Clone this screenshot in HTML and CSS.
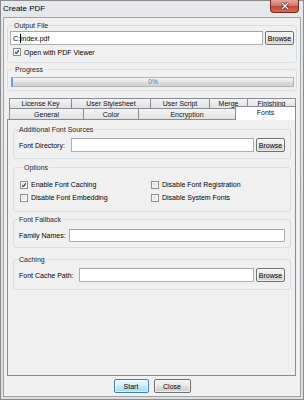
FILE: index.html
```html
<!DOCTYPE html>
<html>
<head>
<meta charset="utf-8">
<link rel="stylesheet" href="styles.css">
</head>
<body>
<div class="window">
  <div class="titlebar">
    <span class="title">Create PDF</span>
    <div class="close">
      <svg width="12" height="8" viewBox="0 0 12 8"><path d="M3 1 L9 7 M9 1 L3 7" stroke="#5a1a14" stroke-width="2.6"/><path d="M3 1 L9 7 M9 1 L3 7" stroke="#ffffff" stroke-width="1.4"/></svg>
    </div>
  </div>
  <div class="client">
    <div class="group g-output">
      <span class="gt">Output File</span>
      <div class="row out-row">
        <div class="field grow"><span class="val">C:<span class="caret"></span>index.pdf</span></div>
        <button class="btn">Browse</button>
      </div>
      <label class="check out-check"><span class="box checked"></span>Open with PDF Viewer</label>
    </div>
    <div class="group g-progress">
      <span class="gt">Progress</span>
      <div class="progress"><span>0%</span></div>
    </div>

    <div class="tabs">
      <div class="tabrow r1">
        <div class="tab t-lic">License Key</div>
        <div class="tab t-uss">User Stylesheet</div>
        <div class="tab t-usc">User Script</div>
        <div class="tab t-mrg">Merge</div>
        <div class="tab t-fin last">Finishing</div>
      </div>
      <div class="tabrow r2">
        <div class="tab t-gen">General</div>
        <div class="tab t-col">Color</div>
        <div class="tab t-enc">Encryption</div>
        <div class="tab t-fnt sel last">Fonts</div>
      </div>
    </div>
    <div class="panel">
      <div class="group p1">
        <span class="gt">Additional Font Sources</span>
        <div class="row r-p1">
          <span class="lbl l-dir">Font Directory:</span>
          <div class="field grow"></div>
          <button class="btn">Browse</button>
        </div>
      </div>
      <div class="group p2">
        <span class="gt">Options</span>
        <div class="grid">
          <label class="check"><span class="box checked"></span>Enable Font Caching</label>
          <label class="check"><span class="box"></span>Disable Font Registration</label>
          <label class="check"><span class="box"></span>Disable Font Embedding</label>
          <label class="check"><span class="box"></span>Disable System Fonts</label>
        </div>
      </div>
      <div class="group p3">
        <span class="gt">Font Fallback</span>
        <div class="row r-p3">
          <span class="lbl l-fam">Family Names:</span>
          <div class="field grow f13"></div>
        </div>
      </div>
      <div class="group p4">
        <span class="gt">Caching</span>
        <div class="row r-p4">
          <span class="lbl l-cache">Font Cache Path:</span>
          <div class="field grow"></div>
          <button class="btn">Browse</button>
        </div>
      </div>
    </div>
    <div class="buttons">
      <button class="btn b-start default">Start</button>
      <button class="btn b-close">Close</button>
    </div>
  </div>
</div>
</body>
</html>
```
FILE: styles.css
```css
* { box-sizing: border-box; }
html, body { margin: 0; padding: 0; }
body {
  width: 304px; height: 400px; overflow: hidden;
  background: #ffffff;
  font-family: "Liberation Sans", Arial, sans-serif;
  font-size: 7px;
  color: #000;
}
.window {
  width: 304px; height: 400px;
  border: 1px solid #8c8c8c;
  background: linear-gradient(#e6e8eb, #dadde1);
  padding: 0 2px 2px 2px;
  display: flex; flex-direction: column;
}
.titlebar {
  height: 16px;
  flex: none;
  display: flex; align-items: flex-start;
}
.title {
  font-size: 8px;
  line-height: 15px;
  color: #000;
}
.close {
  margin-left: auto;
  margin-right: 2px;
  width: 29px; height: 13px;
  margin-top: -1px;
  border: 1px solid #6e2a22;
  border-top: none;
  border-radius: 0 0 4px 4px;
  background: linear-gradient(#e6a79d 0%, #d47868 45%, #c24a36 55%, #d66a55 100%);
  display: flex; align-items: center; justify-content: center;
}
.client {
  flex: 1;
  border: 1px solid #a3a3a3;
  background: #f0f0f0;
  padding: 0 3px;
  display: flex; flex-direction: column;
}

/* group boxes: title sits on the top border line */
.group {
  flex: none;
  display: flex; flex-direction: column;
  border: 1px solid #d5dfe5;
  border-radius: 3px;
}
.gt {
  align-self: flex-start;
  margin: -5px 0 0 3px;
  padding: 0 1px;
  height: 9px;
  line-height: 9px;
  background: #f0f0f0;
  color: #1e1e1e;
  white-space: nowrap;
}
.row { display: flex; align-items: center; }
.grow { flex: 1; }
.field {
  height: 14px;
  background: #fff;
  border: 1px solid #abadb3;
  border-top-color: #a3a6ad;
  display: flex; align-items: center;
  padding-left: 2px;
}
.field.f13 { height: 13px; }
.val { line-height: 9px; display: flex; align-items: center; }
.caret { display: inline-block; width: 1px; height: 9px; background: #000; }
.btn {
  font-family: inherit;
  font-size: 7px;
  height: 14px;
  width: 29px;
  padding: 0;
  margin: 0;
  color: #000;
  border: 1px solid #707070;
  border-radius: 2px;
  background: linear-gradient(#f2f2f2 0%, #ebebeb 45%, #dddddd 55%, #cfcfcf 100%);
  box-shadow: inset 0 0 0 1px rgba(255,255,255,0.6);
  flex: none;
}
.row .btn { margin-left: 2px; }
.check { display: flex; align-items: center; height: 13px; white-space: nowrap; }
.box {
  width: 8px; height: 8px;
  border: 1px solid #8e8f8f;
  background: linear-gradient(135deg, #dcdcdc, #f8f8f8);
  box-shadow: inset 0 0 0 1px #f4f4f4;
  margin-right: 3px;
  flex: none;
}
.box.checked {
  background: url("data:image/svg+xml,%3Csvg xmlns='http://www.w3.org/2000/svg' width='6' height='6' viewBox='0 0 6 6'%3E%3Cpath d='M0.8 3.2 L2.3 4.9 L5.3 0.6' fill='none' stroke='%23344a7a' stroke-width='1.2'/%3E%3C/svg%3E") center/6px 6px no-repeat, linear-gradient(135deg, #dcdcdc, #f8f8f8);
}

/* top groups */
.g-output { margin-top: 7px; height: 38px; padding: 0 2px; }
.out-row { margin-top: 1px; }
.out-check { margin: 1px 0 0 3px; height: 12px; }
.g-progress { margin-top: 6px; height: 22px; padding: 0 2px 0 3px; }
.progress {
  margin-top: 3px;
  height: 10px;
  border: 1px solid #b2b2b2;
  border-radius: 1px;
  background: linear-gradient(#f3f3f3 0%, #e8e8e8 45%, #dadada 55%, #d2d2d2 100%);
  border-left: 2px solid #56a3e6;
  display: flex; align-items: center; justify-content: center;
  color: #3a78d0;
  font-size: 6.5px;
  line-height: 8px;
}

/* tabs */
.tabs { margin-top: 7px; padding-left: 2px; display: flex; flex-direction: column; position: relative; z-index: 1; flex: none; }
.tabrow { display: flex; }
.tab {
  flex: none;
  border: 1px solid #898c95;
  border-bottom: none;
  border-right: none;
  background: linear-gradient(#f3f3f3, #e2e2e2);
  text-align: center;
  font-size: 7px;
  color: #111;
  white-space: nowrap;
}
.tab.last { border-right: 1px solid #898c95; }
.r1 .tab { height: 10px; line-height: 10px; }
.r2 .tab { height: 11px; line-height: 11px; }
.t-lic { width: 62px; }
.t-uss { width: 79px; }
.t-usc { width: 59px; }
.t-mrg { width: 38px; }
.t-fin { width: 49px; }
.t-gen { width: 74px; }
.t-col { width: 55px; }
.t-enc { width: 97px; }
.t-fnt { width: 61px; }
.r2 .tab.sel {
  background: #fff;
  height: 14px;
  margin-top: -2px;
  margin-bottom: -1px;
  line-height: 11px;
}

/* panel */
.panel {
  flex: none;
  height: 257px;
  border: 1px solid #898c95;
  background: #f0f0f0;
  margin-right: 1px;
  padding: 0 4px 0 5px;
  display: flex; flex-direction: column;
}
.lbl { margin-left: 4px; white-space: nowrap; flex: none; }
.l-dir { width: 52px; }
.l-fam { width: 50px; }
.l-cache { width: 60px; }
.p1 { margin-top: 9px; height: 30px; padding: 0 5px 0 1px; }
.r-p1 { margin-top: 4px; }
.p2 { margin-top: 8px; height: 45px; padding: 0 2px 0 6px; }
.grid { display: grid; grid-template-columns: 131px 1fr; margin-top: 6px; }
.p3 { margin-top: 7px; height: 29px; padding: 0 5px 0 1px; }
.r-p3 { margin-top: 5px; }
.p4 { margin-top: 11px; height: 31px; padding: 0 5px 0 1px; }
.r-p4 { margin-top: 4px; }

/* bottom buttons */
.buttons { display: flex; justify-content: center; gap: 5px; margin-top: 3px; flex: none; }
.b-start { width: 35px; }
.b-close { width: 37px; }
.btn.default {
  border-color: #3c7fb1;
  background: linear-gradient(#eaf6fd 0%, #d9f0fc 45%, #bee6fd 55%, #a7d9f5 100%);
}
```
